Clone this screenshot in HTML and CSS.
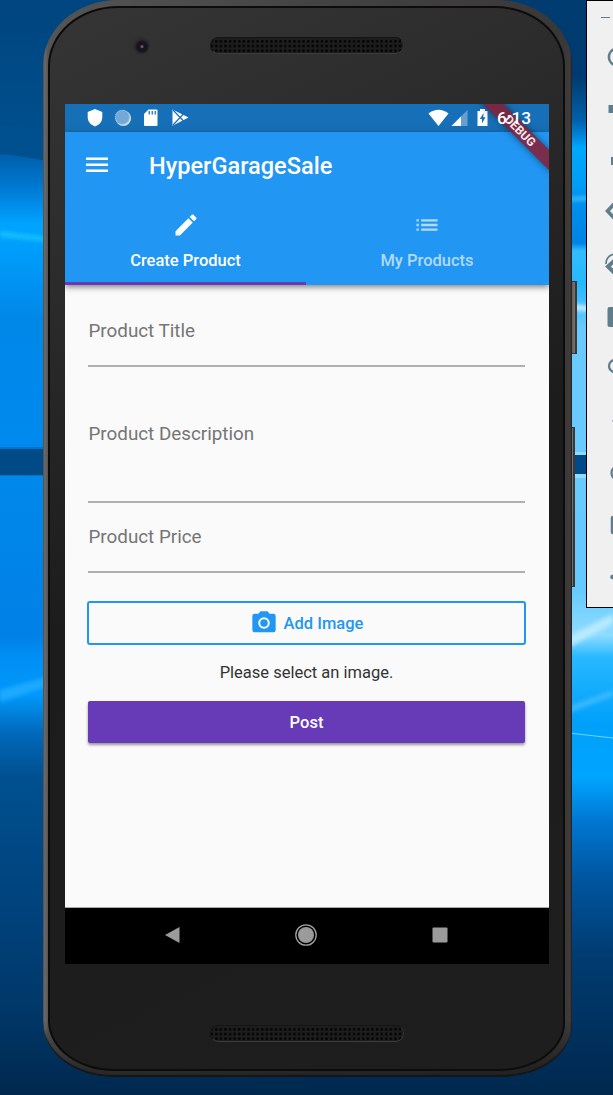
FILE: index.html
```html
<!DOCTYPE html>
<html lang="en">
<head>
<meta charset="utf-8">
<title>HyperGarageSale</title>
<link rel="stylesheet" href="styles.css">
</head>
<body>
<div class="desktop">
  <svg class="wallpaper" viewBox="0 0 613 1095" preserveAspectRatio="none">
    <defs>
      <linearGradient id="base" x1="0" y1="0" x2="0" y2="1">
        <stop offset="0" stop-color="#00457f"/><stop offset=".14" stop-color="#00508f"/>
        <stop offset=".142" stop-color="#0060ac"/><stop offset=".17" stop-color="#0078d0"/><stop offset=".19" stop-color="#0090ee"/>
        <stop offset=".205" stop-color="#00a4ff"/><stop offset=".235" stop-color="#009bfa"/>
        <stop offset=".29" stop-color="#0088e8"/><stop offset=".4" stop-color="#0089ee"/>
        <stop offset=".45" stop-color="#0087ea"/><stop offset=".58" stop-color="#0080e6"/>
        <stop offset=".6" stop-color="#008ff6"/><stop offset=".635" stop-color="#0098fa"/>
        <stop offset=".67" stop-color="#0068ba"/><stop offset=".71" stop-color="#00508f"/>
        <stop offset=".83" stop-color="#00427c"/><stop offset=".92" stop-color="#003869"/>
        <stop offset="1" stop-color="#00284e"/>
      </linearGradient>
      <linearGradient id="right" x1="0" y1="0" x2="0" y2="1">
        <stop offset="0" stop-color="#003c70"/><stop offset=".07" stop-color="#003a70"/>
        <stop offset=".11" stop-color="#0061aa"/><stop offset=".125" stop-color="#0088dc"/>
        <stop offset=".135" stop-color="#00a8ff"/><stop offset=".17" stop-color="#009cf8"/>
        <stop offset=".18" stop-color="#0090ee"/><stop offset=".222" stop-color="#0084e4"/>
        <stop offset=".229" stop-color="#32bcff"/><stop offset=".26" stop-color="#25b8ff"/>
        <stop offset=".3" stop-color="#6acaff"/><stop offset=".54" stop-color="#66caff"/>
        <stop offset=".58" stop-color="#8edcff"/><stop offset=".6" stop-color="#28b8ff"/>
        <stop offset=".66" stop-color="#00a0fa"/><stop offset=".71" stop-color="#00a5ff"/>
        <stop offset=".75" stop-color="#0077d2"/><stop offset=".8" stop-color="#0057a2"/>
        <stop offset=".87" stop-color="#003c72"/><stop offset="1" stop-color="#00284e"/>
      </linearGradient>
      <filter id="soft" x="-20%" y="-80%" width="140%" height="260%"><feGaussianBlur stdDeviation="2"/></filter>
    </defs>
    <rect width="306" height="1095" fill="url(#base)"/>
    <rect x="306" width="307" height="1095" fill="url(#right)"/>
    <path d="M0 153L60 163V130L0 125z" fill="#004f8e"/>
    <g filter="url(#soft)">
      <path d="M0 231L50 237V242L0 237z" fill="#17c0ff"/>
      <path d="M0 690L50 676V686L0 702z" fill="#1da9ff"/>
      <path d="M560 198L613 195V199L560 201z" fill="#45c7ff"/>
      <path d="M560 303L613 309V313L560 309z" fill="#d5f2ff"/>
      <path d="M560 641L613 614V624L560 652z" fill="#b8eaff"/>
      <path d="M560 710L613 690V696L560 716z" fill="#3cbaff"/>
    </g>
    <path d="M560 732L613 738" stroke="#6fd2ff"/>
    <path d="M0 447H50V476H0z" fill="#0074c8"/>
    <path d="M0 449H50V475H0z" fill="#004a88"/>
    <path d="M560 452H613V478H560z" fill="#92dbff"/>
    <path d="M560 455H613V474H560z" fill="#004a8a"/>
  </svg>

  <div class="side-key power"></div>
  <div class="side-key volume"></div>

  <main class="phone">
    <div class="body">
      <div class="top-bezel">
        <span class="camera"></span>
        <span class="speaker"></span>
      </div>
      <div class="screen">
        <div class="status-bar">
          <div class="notifications">
            <svg width="18" height="20" viewBox="0 0 18 20"><path d="M9 1L16.300 4V9C16.300 14 13 17 9 18.500C5 17 1.700 14 1.700 9V4z" fill="#fff"/></svg>
            <svg width="18" height="20" viewBox="0 0 18 20"><circle cx="9.300" cy="10.200" r="7.800" fill="#c8def0"/><circle cx="8.300" cy="9.200" r="7.300" fill="#74a9d5"/><circle cx="8.300" cy="9.200" r="7" fill="none" stroke="#a9cae6" stroke-dasharray="1 1"/></svg>
            <svg width="18" height="20" viewBox="0 0 18 20"><path d="M6.500 1.500H14.500Q15.500 1.500 15.500 2.500V17Q15.500 18 14.500 18H3Q2 18 2 17V6z" fill="#fff"/><path d="M7.300 3V6.500M10.300 3V6.500M13.300 3V6.500" stroke="#3280bd" stroke-width="1.500"/></svg>
            <svg width="18" height="20" viewBox="0 0 18 20"><path d="M1.500 1.500L17.500 9.600L1.500 17.700z" fill="#fff"/><path d="M2 2L12.500 13M2 17L12.500 6" stroke="#1872b9" stroke-width="1.200"/></svg>
          </div>
          <div class="system">
            <svg width="21" height="20" viewBox="0 0 21 20"><path d="M.5 5.500Q10.500-2 20.500 5.500L10.500 18z" fill="#fff"/></svg>
            <svg class="signal" width="17" height="20" viewBox="0 0 17 20"><path d="M16.500 2V18H.5z" fill="#679fd0"/><path d="M10 8.500V18H.5z" fill="#fff"/></svg>
            <svg class="battery" width="11" height="20" viewBox="0 0 11 20"><path d="M.5 3H3V1H8V3H10.500V18H.5z" fill="#fff"/><path d="M6.600 5L2.800 11H5V15.500L8.500 9.300H6.300z" fill="#176eb3"/></svg>
            <span class="clock">6:13</span>
          </div>
        </div>
        <header class="app-bar">
          <div class="toolbar">
            <svg width="22" height="16" viewBox="0 0 22 16"><path d="M0 1.800H22M0 7.800H22M0 13.800H22" stroke="#fff" stroke-width="2.400"/></svg>
            <h1>HyperGarageSale</h1>
          </div>
          <nav class="tabs">
            <a class="tab active">
              <svg width="28" height="28" viewBox="0 0 24 24"><path fill="currentColor" d="M3 17.250V21h3.750L17.810 9.940l-3.750-3.750L3 17.250zM20.710 7.040a1 1 0 0 0 0-1.410l-2.340-2.340a1 1 0 0 0-1.410 0l-1.830 1.830 3.750 3.750 1.830-1.830z"/></svg>
              <span>Create Product</span>
            </a>
            <a class="tab">
              <svg width="28" height="28" viewBox="0 0 24 24"><path fill="currentColor" d="M3 13h2v-2H3v2zm0 4h2v-2H3v2zm0-8h2V7H3v2zm4 4h14v-2H7v2zm0 4h14v-2H7v2zM7 7v2h14V7H7z"/></svg>
              <span>My Products</span>
            </a>
          </nav>
        </header>
        <section class="form">
          <div class="field title">Product Title</div>
          <div class="field description">Product Description</div>
          <div class="field price">Product Price</div>
          <button class="add-image">
            <svg width="28" height="28" viewBox="0 0 24 24"><path fill="currentColor" fill-rule="evenodd" d="M9 2L7.170 4H4a2 2 0 0 0-2 2v12a2 2 0 0 0 2 2h16a2 2 0 0 0 2-2V6a2 2 0 0 0-2-2h-3.170L15 2H9zm3 15a5 5 0 1 1 0-10 5 5 0 0 1 0 10z"/><circle cx="12" cy="12" r="3.200" fill="currentColor"/></svg>
            <span>Add Image</span>
          </button>
          <p class="hint">Please select an image.</p>
          <button class="post">Post</button>
        </section>
        <div class="nav-bar">
          <svg width="24" height="24" viewBox="0 0 24 24"><path d="M5 12L19.500 4V20z" fill="#9b9b9b"/></svg>
          <svg width="24" height="24" viewBox="0 0 24 24"><circle cx="12" cy="12" r="10.200" fill="none" stroke="#a3a3a3" stroke-width="1.300"/><circle cx="12" cy="12" r="8" fill="#9b9b9b"/></svg>
          <svg width="24" height="24" viewBox="0 0 24 24"><rect x="4.500" y="4.500" width="15" height="15" rx="1" fill="#9b9b9b"/></svg>
        </div>
        <div class="debug"><span>DEBUG</span></div>
      </div>
      <div class="bottom-bezel"><span class="speaker"></span></div>
    </div>
  </main>

  <aside class="emulator-tools">
    <svg class="minimize" width="26" height="30" viewBox="0 0 26 30"><path d="M14 16.500H23" stroke="#607d8b"/></svg>
    <svg viewBox="0 0 26 52"><path d="M28 18A8.300 8.300 0 0 0 28 34" fill="none" stroke="#607d8b" stroke-width="2.600"/></svg>
    <svg viewBox="0 0 26 52"><path d="M21.500 22H27V30H21.500z" fill="#607d8b"/></svg>
    <svg viewBox="0 0 26 52"><path d="M24 22H27V30H24z" fill="#607d8b"/></svg>
    <svg viewBox="0 0 26 52"><path d="M28 16L20.500 24L28 32" fill="none" stroke="#607d8b" stroke-width="3.600"/></svg>
    <svg viewBox="0 0 26 52"><path d="M28 21L21 27.500L28 34.500" fill="none" stroke="#607d8b" stroke-width="4"/><path d="M19 25Q19 17 27 15" fill="none" stroke="#607d8b" stroke-width="1.600"/></svg>
    <svg viewBox="0 0 26 52"><rect x="20.500" y="16" width="10" height="20" rx="2" fill="#607d8b"/></svg>
    <svg viewBox="0 0 26 52"><circle cx="28" cy="23" r="6" fill="none" stroke="#607d8b" stroke-width="2.300"/></svg>
    <svg viewBox="0 0 26 52"><path d="M25 26L28 23V28z" fill="#607d8b"/></svg>
    <svg viewBox="0 0 26 52"><circle cx="32" cy="26" r="7.500" fill="none" stroke="#607d8b" stroke-width="2.300"/></svg>
    <svg viewBox="0 0 26 52"><rect x="25" y="18" width="16" height="16" rx="1" fill="none" stroke="#607d8b" stroke-width="2.500"/></svg>
    <svg viewBox="0 0 26 52"><circle cx="25.500" cy="26" r="2.300" fill="#607d8b"/></svg>
  </aside>
</div>
</body>
</html>
```

FILE: styles.css
```css
* { box-sizing: border-box; }
body { margin: 0; font-family: Roboto, sans-serif; }
svg { display: block; flex: none; }
button { font: inherit; padding: 0; }

.desktop { position: relative; width: 613px; height: 1095px; overflow: hidden; background: #004a88; }
.wallpaper { width: 613px; height: 1095px; }

/* Phone hardware */
.phone {
  position: absolute; left: 43px; top: 0; width: 529px; height: 1077px;
  padding: 6px 7px 6px 5px;
  border-radius: 75px 75px 70px 70px / 65px 65px 52px 54px;
  background:
    linear-gradient(180deg, transparent 1020px, rgba(25,25,25,.7) 1070px),
    linear-gradient(90deg, #5a5a5a 0, #6b6766 2px, #555 5px, #444 50%, #3a3737 521px, #403c3c 527px, #222 529px);
  box-shadow: inset 0 -2px 1px #151515;
}
.body {
  height: 100%; padding: 96px 14px 0 15px;
  display: flex; flex-direction: column;
  border: 2px solid #0c0c0c;
  border-radius: 70px 70px 66px 66px / 60px 60px 48px 50px;
  background: linear-gradient(155deg, #353535 0, #2c2c2c 20%, #1c1c1c 48%, #1e1e1e 100%);
}
.side-key { position: absolute; border: 1px solid #3a3836; border-right-width: 2px; background: linear-gradient(90deg, #3b3938, #777371); }
.power { left: 566px; top: 281px; width: 11px; height: 73px; }
.volume { left: 566px; top: 427px; width: 9px; height: 160px; }
.top-bezel { height: 96px; margin-top: -96px; flex: none; display: flex; align-items: flex-start; padding: 29px 0 0 65px; }
.camera { width: 20px; height: 20px; margin-top: -2px; border-radius: 50%; background: radial-gradient(circle at 60% 58%, #7b4e5c 0 1px, #17151c 2px 5px, #2a292b 7px, #323232 10px); }
.speaker {
  width: 194px; height: 17px; border-radius: 9px; flex: none;
  border: 1px solid #151515; border-bottom-color: #3c3c3c; border-right-color: #333;
  background: radial-gradient(circle, #050505 1.100px, transparent 1.600px) 3px 1px / 4.600px 4.700px, #1d1d1d;
}
.top-bezel .speaker { margin-left: 60px; }
.bottom-bezel { display: flex; padding: 61px 0 0 145px; }

/* Device screen */
.screen { position: relative; width: 484px; height: 860px; flex: none; overflow: hidden; display: flex; flex-direction: column; background: #fafafa; }
.status-bar { height: 28px; flex: none; display: flex; justify-content: space-between; padding: 4px 18px 0 21px; background: #1770b7; color: #fff; }
.notifications { display: flex; gap: 10px; }
.notifications svg:last-child { margin-left: 1px; }
.system { display: flex; }
.signal { margin-left: 2px; }
.battery { margin-left: 9px; }
.clock { position: relative; z-index: 2; margin-left: 9px; width: 34px; font-size: 17.300px; line-height: 21px; font-weight: 500; white-space: nowrap; }
.app-bar { height: 153px; flex: none; background: #2196f3; color: #fff; box-shadow: 0 2px 6px rgba(0,0,0,.5); display: flex; flex-direction: column; }
.toolbar { height: 66px; display: flex; align-items: center; gap: 41px; padding-left: 21px; }
h1 { margin: 1px 0 0; font-size: 23.550px; line-height: 28px; font-weight: 500; }
.tabs { flex: 1; display: grid; grid-template-columns: 241px 243px; }
.tab { display: flex; flex-direction: column; align-items: center; padding-top: 13px; gap: 12px; font-size: 16.500px; line-height: 20px; font-weight: 500; color: #b2dafb; border-bottom: 3px solid transparent; }
.tab.active { color: #fff; border-color: #673ab7; }
.tab + .tab { padding-right: 1px; }

.form { flex: 1; padding: 0 24px 0 23px; display: flex; flex-direction: column; }
.field { padding-left: .5px; font-size: 18.820px; line-height: 24px; color: #757575; border-bottom: 2px solid #afafaf; }
.title { margin-top: 34px; height: 48px; }
.description { margin-top: 55px; height: 81px; }
.price { margin-top: 22px; height: 48px; }
.add-image { margin: 28px -1px 0; height: 44px; border: 2px solid #2196f3; border-radius: 3px; background: transparent; color: #2196f3; font-size: 16.500px; font-weight: 500; display: flex; align-items: center; justify-content: center; gap: 6px; }
.hint { margin: 17px 0 0; line-height: 22px; font-size: 16.500px; text-align: center; color: #333; }
.post { margin-top: 17px; height: 42px; border: 0; border-radius: 2px; background: #673ab7; color: #fff; font-size: 16.500px; font-weight: 500; box-shadow: 0 2px 3px rgba(0,0,0,.4); }
.nav-bar { height: 57px; flex: none; display: flex; justify-content: center; gap: 110px; padding: 15px 2px 0 0; background: #000; border-top: 1px solid #aaa; }
.debug { position: absolute; top: 20px; left: 405px; width: 100px; height: 14px; transform: rotate(45deg); background: rgba(140,25,45,.84); box-shadow: 0 0 7px rgba(0,0,0,.5); color: #f4e8ec; font-size: 12px; line-height: 14px; font-weight: 700; text-align: center; }

/* Emulator side toolbar */
.emulator-tools { position: absolute; left: 586px; top: 0; width: 60px; height: 608px; border: 1px solid #000; background: #f0f0f0; color: #607d8b; display: flex; flex-direction: column; }
.emulator-tools svg { width: 26px; height: 52px; overflow: visible; }
.emulator-tools .minimize { height: 30px; }
```
